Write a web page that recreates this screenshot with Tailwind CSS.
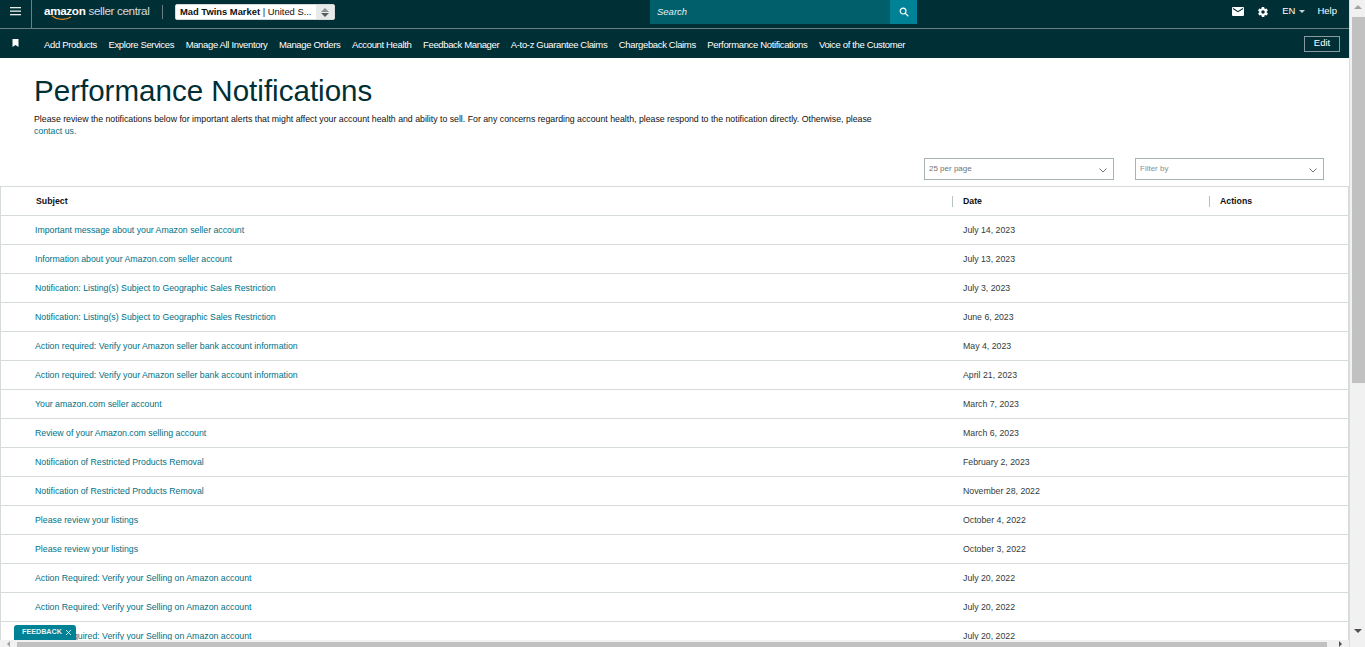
<!DOCTYPE html>
<html lang="en">
<head>
    <meta charset="UTF-8">
    <title>Performance Notifications</title>
    <script src="https://cdn.jsdelivr.net/npm/@tailwindcss/browser@4"></script>
</head>
<body class="bg-white overflow-hidden font-['Liberation_Sans',Arial,sans-serif]">
<div class="relative flex w-[1365px] h-[647px] overflow-hidden">
    <div class="flex flex-col w-[1349px] h-[647px]">
        <div class="flex-1 min-h-0 overflow-hidden">
            <!-- top bar -->
            <header class="flex items-start h-[29px] bg-[#002f36] border-b border-[#6c8084] text-white">
                <div class="flex items-center justify-center w-[32px] h-[28px] pb-[5px] border-r border-[#6c8084]">
                    <svg width="11" height="9" viewBox="0 0 11 9" fill="#e6ecec"><rect y="0" width="11" height="1.300"/><rect y="3.500" width="11" height="1.300"/><rect y="7" width="11" height="1.300"/></svg>
                </div>
                <div class="relative flex items-baseline ml-[12px] mt-[1px] w-[106px] leading-[20px] whitespace-nowrap">
                    <span class="font-bold text-[11.700px] -tracking-[0.35px]">amazon</span><span class="ml-[3px] text-[11.750px] -tracking-[0.4px] text-[#d5dddf]">seller central</span>
                    <svg class="absolute left-[7px] top-[14px]" width="22" height="7" viewBox="0 0 22 7" fill="none"><path d="M1 1C6 5 14 5.500 20 2" stroke="#e88b23" stroke-width="1.100"/></svg>
                </div>
                <div class="ml-[12px] mt-[5px] w-px h-[14px] bg-[#6c8084]"></div>
                <div class="flex items-center ml-[12px] mt-[4px] w-[160px] h-[16px] bg-white rounded-[2px] border border-[#d5d9d9] text-[#0f1111] overflow-hidden">
                    <span class="pl-[4px] w-[141px] text-[9.400px] leading-[14px] whitespace-nowrap"><span class="font-bold">Mad Twins Market</span> | United S...</span>
                    <span class="flex flex-col items-center justify-center gap-[1px] w-[18px] h-full bg-[#e8eaea]">
                        <span class="w-0 h-0 border-x-[4px] border-x-transparent border-b-[4px] border-b-[#8a9494]"></span>
                        <span class="w-0 h-0 border-x-[4px] border-x-transparent border-t-[4px] border-t-[#555f5f]"></span>
                    </span>
                </div>
                <div class="flex ml-[315px] h-[24px] w-[267px]">
                    <div class="flex items-center flex-1 pl-[7px] bg-[#005f6b] text-[9.500px] italic text-[#e6f0f1]">Search</div>
                    <div class="flex items-center justify-center w-[27px] bg-[#008296]">
                        <svg width="10" height="10" viewBox="0 0 11 11" fill="none" stroke="#fff" stroke-width="1.300"><circle cx="4.500" cy="4.500" r="3.200"/><path d="M7 7l3.200 3.200"/></svg>
                    </div>
                </div>
                <div class="flex items-center ml-auto h-[23px] text-[9.500px]">
                    <svg width="12" height="9" viewBox="0 0 12 9"><rect width="12" height="9" rx="1" fill="#fff"/><path d="M1 1.500l5 3.200 5-3.200" fill="none" stroke="#002f36" stroke-width="1.100"/></svg>
                    <svg class="ml-[13px]" width="12" height="12" viewBox="0 0 24 24" fill="#fff"><path d="M19.400 13c.1-.3.1-.7.1-1s0-.7-.1-1l2.100-1.600c.2-.2.2-.4.1-.6l-2-3.500c-.1-.2-.4-.3-.6-.2l-2.500 1c-.5-.4-1.100-.7-1.700-1l-.4-2.600c0-.3-.2-.5-.5-.5h-4c-.3 0-.5.2-.5.4l-.4 2.700c-.6.200-1.200.6-1.700 1l-2.500-1c-.2-.1-.5 0-.6.2l-2 3.500c-.1.200-.1.500.1.600L4.600 11c-.1.300-.1.700-.1 1s0 .7.1 1l-2.100 1.600c-.2.200-.2.400-.1.600l2 3.500c.1.200.4.300.6.200l2.500-1c.5.400 1.100.7 1.700 1l.4 2.600c0 .3.200.5.500.5h4c.3 0 .5-.2.500-.4l.4-2.700c.6-.2 1.200-.6 1.700-1l2.500 1c.2.100.5 0 .6-.2l2-3.500c.1-.2.100-.5-.1-.6zM12 15.500a3.500 3.500 0 1 1 0-7 3.500 3.500 0 0 1 0 7z"/></svg>
                    <span class="ml-[13px]">EN</span>
                    <span class="ml-[4px] w-0 h-0 border-x-[3px] border-x-transparent border-t-[3px] border-t-[#c9d3d4]"></span>
                    <span class="ml-[12px] mr-[12px]">Help</span>
                </div>
            </header>
            <!-- favourites nav -->
            <nav class="flex items-center h-[29px] pt-[4px] bg-[#002f36] text-white text-[9.500px] -tracking-[0.35px] whitespace-nowrap">
                <svg class="ml-[12px] mr-[13px] -mt-[6px]" width="7" height="8" viewBox="0 0 7 8" fill="#fff"><path d="M.5 0h6v8L3.500 6 .5 8z"/></svg>
                <div class="flex items-center gap-[11.550px] ml-[12px]">
                    <span>Add Products</span>
                    <span>Explore Services</span>
                    <span>Manage All Inventory</span>
                    <span>Manage Orders</span>
                    <span>Account Health</span>
                    <span>Feedback Manager</span>
                    <span>A-to-z Guarantee Claims</span>
                    <span>Chargeback Claims</span>
                    <span>Performance Notifications</span>
                    <span>Voice of the Customer</span>
                </div>
                <div class="flex items-center justify-center ml-auto mr-[9px] -mt-[4px] w-[36px] h-[16px] border border-[#8a9a9c] tracking-normal">Edit</div>
            </nav>
            <!-- page heading -->
            <div class="pl-[34px] pt-[16px] h-[100px]">
                <h1 class="text-[29.560px] leading-[33px] font-normal text-[#002f36]">Performance Notifications</h1>
                <p class="mt-[6px] w-[860px] text-[8.750px] leading-[12px] text-[#0f1111]">Please review the notifications below for important alerts that might affect your account health and ability to sell. For any concerns regarding account health, please respond to the notification directly. Otherwise, please <a class="text-[#007185]">contact us.</a></p>
            </div>
            <!-- filters -->
            <div class="flex justify-end gap-[21px] pr-[25px] h-[28px]">
                <div class="flex items-center justify-between w-[190px] h-[22px] px-[4px] border border-[#a6b2b3] text-[8px] text-[#6f7373]">
                    <span>25 per page</span>
                    <svg class="mr-[2px] mt-[2px]" width="8" height="5" viewBox="0 0 8 5" fill="none" stroke="#6f7373"><path d="M.5.5l3.500 3.500L7.500.5"/></svg>
                </div>
                <div class="flex items-center justify-between w-[189px] h-[22px] px-[4px] border border-[#a6b2b3] text-[8px] text-[#8b9090]">
                    <span>Filter by</span>
                    <svg class="mr-[2px] mt-[2px]" width="8" height="5" viewBox="0 0 8 5" fill="none" stroke="#6f7373"><path d="M.5.5l3.500 3.500L7.500.5"/></svg>
                </div>
            </div>
            <!-- notifications table -->
            <div class="w-[1349px] border border-[#d5dbdb] text-[8.750px]">
                <div class="flex items-center h-[29px] border-b border-[#d5dbdb] font-bold text-[#0f1111]">
                    <div class="w-[951px] pl-[35px] h-[11px] leading-[11px]">Subject</div>
                    <div class="w-[257px] pl-[10px] h-[11px] leading-[11px] border-l border-[#b8c2c3]">Date</div>
                    <div class="flex-1 pl-[10px] h-[11px] leading-[11px] border-l border-[#b8c2c3]">Actions</div>
                </div>
                <div id="rows">
                    <div class="flex items-center h-[29px] pt-[2px] border-b border-[#d5dbdb]"><a class="w-[952px] pl-[34px] text-[#007185]">Important message about your Amazon seller account</a><span class="pl-[10px] text-[#333b3c]">July 14, 2023</span></div>
                    <div class="flex items-center h-[29px] pt-[2px] border-b border-[#d5dbdb]"><a class="w-[952px] pl-[34px] text-[#007185]">Information about your Amazon.com seller account</a><span class="pl-[10px] text-[#333b3c]">July 13, 2023</span></div>
                    <div class="flex items-center h-[29px] pt-[2px] border-b border-[#d5dbdb]"><a class="w-[952px] pl-[34px] text-[#007185]">Notification: Listing(s) Subject to Geographic Sales Restriction</a><span class="pl-[10px] text-[#333b3c]">July 3, 2023</span></div>
                    <div class="flex items-center h-[29px] pt-[2px] border-b border-[#d5dbdb]"><a class="w-[952px] pl-[34px] text-[#007185]">Notification: Listing(s) Subject to Geographic Sales Restriction</a><span class="pl-[10px] text-[#333b3c]">June 6, 2023</span></div>
                    <div class="flex items-center h-[29px] pt-[2px] border-b border-[#d5dbdb]"><a class="w-[952px] pl-[34px] text-[#007185]">Action required: Verify your Amazon seller bank account information</a><span class="pl-[10px] text-[#333b3c]">May 4, 2023</span></div>
                    <div class="flex items-center h-[29px] pt-[2px] border-b border-[#d5dbdb]"><a class="w-[952px] pl-[34px] text-[#007185]">Action required: Verify your Amazon seller bank account information</a><span class="pl-[10px] text-[#333b3c]">April 21, 2023</span></div>
                    <div class="flex items-center h-[29px] pt-[2px] border-b border-[#d5dbdb]"><a class="w-[952px] pl-[34px] text-[#007185]">Your amazon.com seller account</a><span class="pl-[10px] text-[#333b3c]">March 7, 2023</span></div>
                    <div class="flex items-center h-[29px] pt-[2px] border-b border-[#d5dbdb]"><a class="w-[952px] pl-[34px] text-[#007185]">Review of your Amazon.com selling account</a><span class="pl-[10px] text-[#333b3c]">March 6, 2023</span></div>
                    <div class="flex items-center h-[29px] pt-[2px] border-b border-[#d5dbdb]"><a class="w-[952px] pl-[34px] text-[#007185]">Notification of Restricted Products Removal</a><span class="pl-[10px] text-[#333b3c]">February 2, 2023</span></div>
                    <div class="flex items-center h-[29px] pt-[2px] border-b border-[#d5dbdb]"><a class="w-[952px] pl-[34px] text-[#007185]">Notification of Restricted Products Removal</a><span class="pl-[10px] text-[#333b3c]">November 28, 2022</span></div>
                    <div class="flex items-center h-[29px] pt-[2px] border-b border-[#d5dbdb]"><a class="w-[952px] pl-[34px] text-[#007185]">Please review your listings</a><span class="pl-[10px] text-[#333b3c]">October 4, 2022</span></div>
                    <div class="flex items-center h-[29px] pt-[2px] border-b border-[#d5dbdb]"><a class="w-[952px] pl-[34px] text-[#007185]">Please review your listings</a><span class="pl-[10px] text-[#333b3c]">October 3, 2022</span></div>
                    <div class="flex items-center h-[29px] pt-[2px] border-b border-[#d5dbdb]"><a class="w-[952px] pl-[34px] text-[#007185]">Action Required: Verify your Selling on Amazon account</a><span class="pl-[10px] text-[#333b3c]">July 20, 2022</span></div>
                    <div class="flex items-center h-[29px] pt-[2px] border-b border-[#d5dbdb]"><a class="w-[952px] pl-[34px] text-[#007185]">Action Required: Verify your Selling on Amazon account</a><span class="pl-[10px] text-[#333b3c]">July 20, 2022</span></div>
                    <div class="flex items-center h-[29px] pt-[2px] border-b border-[#d5dbdb]"><a class="w-[952px] pl-[34px] text-[#007185]">Action Required: Verify your Selling on Amazon account</a><span class="pl-[10px] text-[#333b3c]">July 20, 2022</span></div>
                </div>
            </div>
        </div>
        <!-- horizontal scrollbar -->
        <div class="flex items-end h-[7px] bg-[#f1f1f1] shrink-0">
            <span class="ml-[7px] w-0 h-0 border-y-[3px] border-y-transparent border-r-[3px] border-r-[#a3a3a3]"></span>
            <div class="ml-[7px] w-[1310px] h-[5px] bg-[#c1c1c1]"></div>
            <span class="ml-[12px] w-0 h-0 border-y-[3px] border-y-transparent border-l-[3px] border-l-[#505050]"></span>
        </div>
    </div>
    <!-- vertical scrollbar -->
    <div class="flex flex-col items-center w-[16px] h-[647px] pl-[1px] bg-[#f1f1f1] border-l border-[#dcdcdc] shrink-0">
        <span class="mt-[5px] w-0 h-0 border-x-[4px] border-x-transparent border-b-[4px] border-b-[#a3a3a3]"></span>
        <div class="mt-[8px] w-[13px] h-[366px] bg-[#c1c1c1]"></div>
        <span class="mt-[246px] w-0 h-0 border-x-[4px] border-x-transparent border-t-[4px] border-t-[#505050]"></span>
    </div>
    <!-- feedback tab -->
    <div class="absolute left-[14px] top-[625px] flex items-center gap-[4px] w-[62px] h-[15px] pl-[8px] bg-[#008296] rounded-t-[3px] text-[7.200px] font-bold text-[#e6f3f5] whitespace-nowrap">
        <span>FEEDBACK</span>
        <svg width="5" height="5" viewBox="0 0 5 5" stroke="#fff" stroke-width=".8"><path d="M0 0l5 5M5 0L0 5"/></svg>
    </div>
</div>
</body>
</html>
